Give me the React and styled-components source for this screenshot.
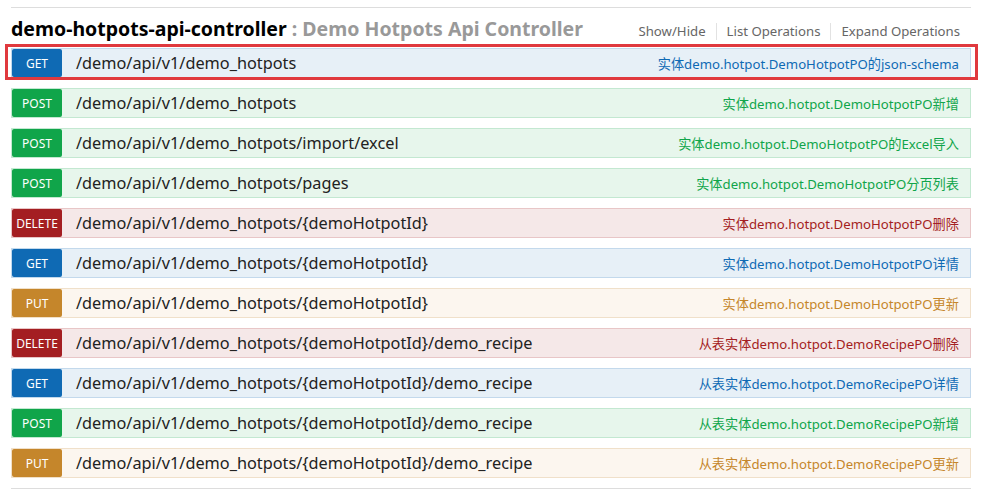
import React from 'react'
import styled, { createGlobalStyle } from 'styled-components'

const GlobalStyle = createGlobalStyle`
    body {
        margin: 0;
        background: #fff;
        font-family: "Noto Sans", "Noto Sans CJK SC", sans-serif;
    }
`

const methods = {
    GET: { badge: '#0f6ab4', bg: '#e7f0f7', border: '#c3d9ec' },
    POST: { badge: '#10a54a', bg: '#e7f6ec', border: '#c3e8d1' },
    DELETE: { badge: '#a41e22', bg: '#f5e8e8', border: '#e8c6c7' },
    PUT: { badge: '#c5862b', bg: '#fcf6ef', border: '#f0e0ca' },
}

const operations = [
    { method: 'GET', path: '/demo/api/v1/demo_hotpots', summary: '实体demo.hotpot.DemoHotpotPO的json-schema', marked: true },
    { method: 'POST', path: '/demo/api/v1/demo_hotpots', summary: '实体demo.hotpot.DemoHotpotPO新增' },
    { method: 'POST', path: '/demo/api/v1/demo_hotpots/import/excel', summary: '实体demo.hotpot.DemoHotpotPO的Excel导入' },
    { method: 'POST', path: '/demo/api/v1/demo_hotpots/pages', summary: '实体demo.hotpot.DemoHotpotPO分页列表' },
    { method: 'DELETE', path: '/demo/api/v1/demo_hotpots/{demoHotpotId}', summary: '实体demo.hotpot.DemoHotpotPO删除' },
    { method: 'GET', path: '/demo/api/v1/demo_hotpots/{demoHotpotId}', summary: '实体demo.hotpot.DemoHotpotPO详情' },
    { method: 'PUT', path: '/demo/api/v1/demo_hotpots/{demoHotpotId}', summary: '实体demo.hotpot.DemoHotpotPO更新' },
    { method: 'DELETE', path: '/demo/api/v1/demo_hotpots/{demoHotpotId}/demo_recipe', summary: '从表实体demo.hotpot.DemoRecipePO删除' },
    { method: 'GET', path: '/demo/api/v1/demo_hotpots/{demoHotpotId}/demo_recipe', summary: '从表实体demo.hotpot.DemoRecipePO详情' },
    { method: 'POST', path: '/demo/api/v1/demo_hotpots/{demoHotpotId}/demo_recipe', summary: '从表实体demo.hotpot.DemoRecipePO新增' },
    { method: 'PUT', path: '/demo/api/v1/demo_hotpots/{demoHotpotId}/demo_recipe', summary: '从表实体demo.hotpot.DemoRecipePO更新' },
]

const Resource = styled.div`
    width: 960px;
    margin: 7px 0 0 11px;
    border-top: 1px solid #ddd;
    border-bottom: 1px solid #ddd;
    padding-bottom: 10px;
`

const Heading = styled.div`
    height: 40px;
    display: flex;
    justify-content: space-between;
    align-items: center;
`

const Title = styled.h2`
    margin: 1px 0 0;
    font-size: 19.5px;
    font-weight: bold;
    line-height: 24px;
    color: #000;
`

const SubTitle = styled.span`
    color: #999;
`

const Options = styled.ul`
    list-style: none;
    margin: 6px 11px 0 0;
    padding: 0;
    display: flex;
`

const Option = styled.li`
    font-size: 13.2px;
    line-height: 17px;
    color: #666;
    padding: 0 10px;
    border-left: 1px solid #e2e2e2;

    &:first-child {
        border-left: none;
    }
    &:last-child {
        padding-right: 0;
    }
`

const Operations = styled.ul`
    list-style: none;
    margin: 0;
    padding: 0;
    display: flex;
    flex-direction: column;
    gap: 10px;
`

const OperationRow = styled.li`
    position: relative;
    height: 28px;
    display: flex;
    align-items: center;
    background: ${props => methods[props.method].bg};
    border: 1px solid ${props => methods[props.method].border};

    &::after {
        content: '';
        display: ${props => props.marked ? 'block' : 'none'};
        position: absolute;
        top: -5px;
        left: -7px;
        right: -8px;
        bottom: -3px;
        border: 3px solid #e0393e;
    }
`

const Badge = styled.span`
    width: 50px;
    height: 28px;
    flex-shrink: 0;
    display: flex;
    align-items: center;
    justify-content: center;
    border-radius: 2px;
    background: ${props => methods[props.method].badge};
    color: #fff;
    font-size: 12px;
    padding-top: 1px;
    box-sizing: border-box;
`

const Path = styled.span`
    margin-left: 14px;
    font-size: 16.3px;
    color: #222;
    flex: 1;
`

const Summary = styled.span`
    padding-right: 11px;
    font-size: 13.2px;
    color: ${props => methods[props.method].badge};
`

const App = () => (
    <>
        <GlobalStyle />
        <Resource>
            <Heading>
                <Title>demo-hotpots-api-controller <SubTitle>: Demo Hotpots Api Controller</SubTitle></Title>
                <Options>
                    <Option>Show/Hide</Option>
                    <Option>List Operations</Option>
                    <Option>Expand Operations</Option>
                </Options>
            </Heading>
            <Operations>
                {operations.map((op, i) => (
                    <OperationRow key={i} method={op.method} marked={op.marked}>
                        <Badge method={op.method}>{op.method}</Badge>
                        <Path>{op.path}</Path>
                        <Summary method={op.method}>{op.summary}</Summary>
                    </OperationRow>
                ))}
            </Operations>
        </Resource>
    </>
)

export default App
